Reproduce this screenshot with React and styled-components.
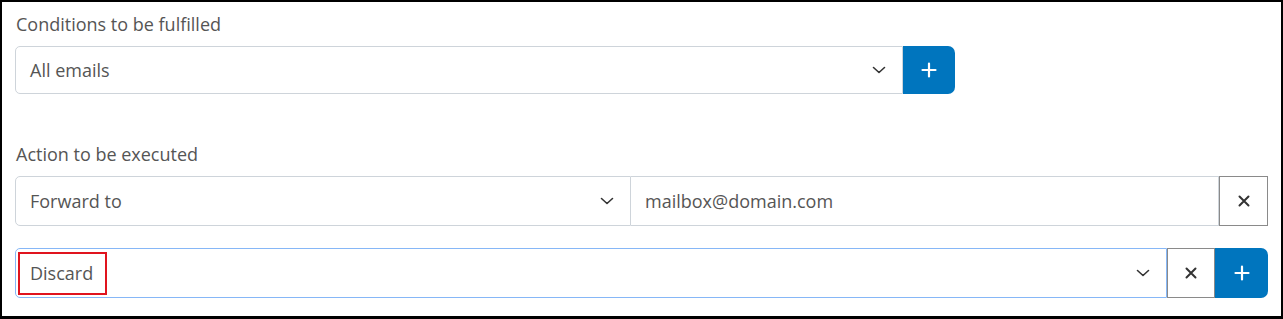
import React from "react";
import styled, { createGlobalStyle } from "styled-components";

const GlobalStyle = createGlobalStyle`
  * { box-sizing: border-box; }
  body {
    margin: 0;
    background: #ffffff;
    font-family: "Open Sans", "Noto Sans", sans-serif;
  }
`;

const Frame = styled.div`
  width: 1283px;
  height: 319px;
  border: 2px solid #000;
  border-bottom-width: 3px;
  padding: 10px 13px 0 13px;
  background: #fff;
`;

const Section = styled.div`
  margin-bottom: ${(p) => p.$gap || 0}px;
`;

const Label = styled.div`
  font-size: 18px;
  line-height: 24px;
  color: #555;
  padding-left: 1px;
  margin-bottom: ${(p) => p.$gap || 10}px;
`;

const Row = styled.div`
  display: flex;
  width: ${(p) => (p.$width ? `${p.$width}px` : "100%")};
  height: ${(p) => p.$height || 48}px;
  margin-bottom: ${(p) => p.$gap || 0}px;
`;

const Select = styled.div`
  position: relative;
  display: flex;
  align-items: center;
  justify-content: space-between;
  flex: ${(p) => (p.$width ? `0 0 ${p.$width}px` : "1 1 auto")};
  border: 1px solid ${(p) => (p.$focus ? "#86b7f7" : "#ced4da")};
  border-radius: 5px 0 0 5px;
  padding: 0 16px 0 14px;
  font-size: 18px;
  color: #555;
  background: #fff;
`;

const Input = styled.div`
  display: flex;
  align-items: center;
  flex: 1 1 auto;
  border: 1px solid #ced4da;
  border-left: none;
  padding: 0 14px;
  font-size: 18px;
  color: #555;
`;

const IconButton = styled.button`
  display: flex;
  align-items: center;
  justify-content: center;
  flex: 0 0 ${(p) => p.$width || 49}px;
  height: 100%;
  padding: 0;
  cursor: pointer;
  border: ${(p) => (p.$primary ? "none" : "1px solid #8a8a8a")};
  border-radius: ${(p) => (p.$last ? "0 7px 7px 0" : "0")};
  background: ${(p) => (p.$primary ? "#0075be" : "#fff")};
  color: ${(p) => (p.$primary ? "#fff" : "#333")};
`;

const Highlight = styled.span`
  position: absolute;
  left: 2px;
  top: 3px;
  width: 89px;
  height: 43px;
  border: 2px solid #e0141e;
`;

const Chevron = () => (
  <svg width="14" height="8" viewBox="0 0 14 8" fill="none">
    <path d="M1.5 1.5L7 6.5L12.5 1.5" stroke="#333" strokeWidth="1.6" strokeLinecap="round" strokeLinejoin="round" />
  </svg>
);

const Plus = () => (
  <svg width="16" height="16" viewBox="0 0 16 16" fill="none">
    <path d="M8 1.5V14.5M1.5 8H14.5" stroke="#fff" strokeWidth="2.2" strokeLinecap="round" />
  </svg>
);

const Cross = () => (
  <svg width="12" height="12" viewBox="0 0 12 12" fill="none">
    <path d="M1.5 1.5L10.5 10.5M10.5 1.5L1.5 10.5" stroke="#333" strokeWidth="2" strokeLinecap="round" />
  </svg>
);

export default function App() {
  return (
    <>
      <GlobalStyle />
      <Frame>
        <Section $gap={48}>
          <Label>Conditions to be fulfilled</Label>
          <Row $width={940} $height={48}>
            <Select>
              All emails
              <Chevron />
            </Select>
            <IconButton $primary $last $width={52}>
              <Plus />
            </IconButton>
          </Row>
        </Section>
        <Section>
          <Label>Action to be executed</Label>
          <Row $height={50} $gap={22}>
            <Select $width={616}>
              Forward to
              <Chevron />
            </Select>
            <Input>mailbox@domain.com</Input>
            <IconButton $width={49}>
              <Cross />
            </IconButton>
          </Row>
          <Row $height={50}>
            <Select $focus>
              Discard
              <Chevron />
              <Highlight />
            </Select>
            <IconButton $width={48}>
              <Cross />
            </IconButton>
            <IconButton $primary $last $width={53}>
              <Plus />
            </IconButton>
          </Row>
        </Section>
      </Frame>
    </>
  );
}
